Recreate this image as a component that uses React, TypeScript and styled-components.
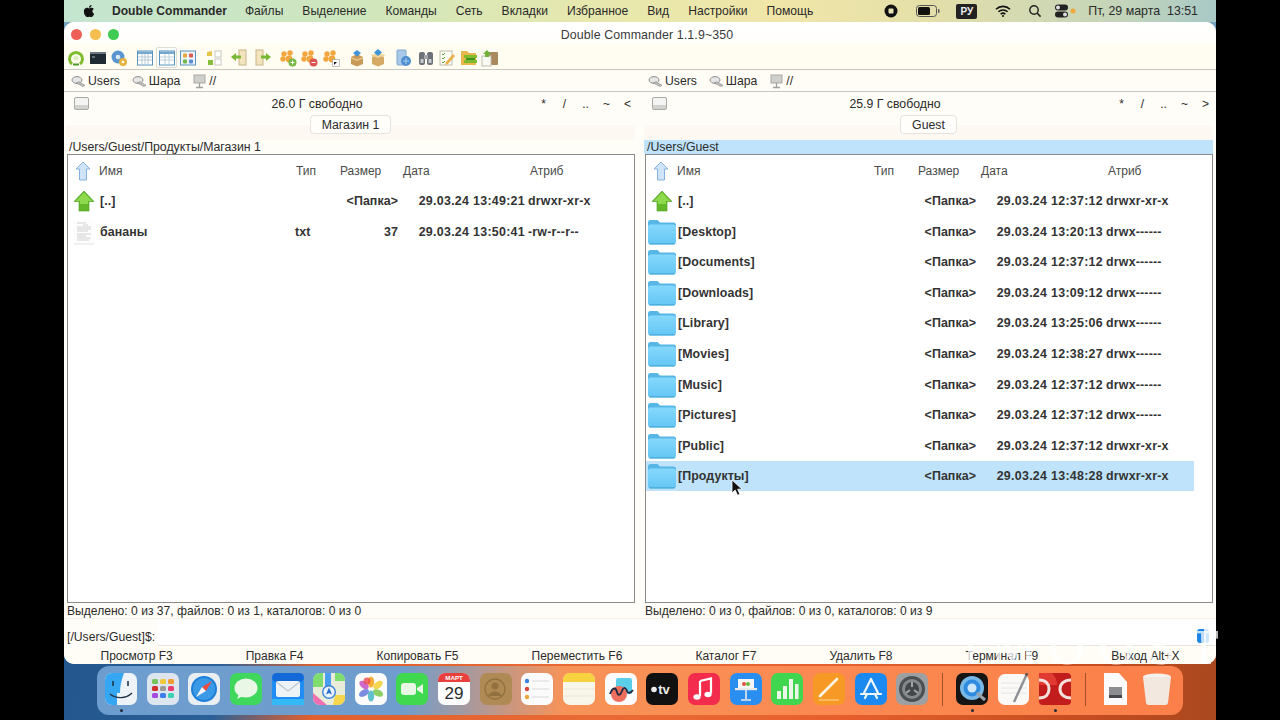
import React from "react";
import styled, { createGlobalStyle } from "styled-components";
import { FaApple } from "react-icons/fa";

const Global = createGlobalStyle`
  html, body { margin: 0; padding: 0; background: #000; }
  body { font-family: "Liberation Sans", Arial, sans-serif; color: #222; }
  * { box-sizing: border-box; }
`;

const Stage = styled.div`
  position: relative;
  width: 1280px;
  height: 720px;
  overflow: hidden;
  background: #000;
  display: flex;
  justify-content: center;
`;
const Screen = styled.div`
  width: 1152px;
  height: 720px;
  display: flex;
  flex-direction: column;
  background:
    linear-gradient(to bottom, #6f9fbe 0, #7ba6bd 40px, transparent 40px),
    linear-gradient(97deg, #1f5288 0, #2a6098 19%, #e0602e 27%, #ea6a35 50%, #e55f2c 70%, #c44c20 90%, #a9481f 100%);
`;
const MenuBar = styled.div`
  height: 22px;
  flex: none;
  display: flex;
  align-items: center;
  padding: 0 18px 0 18px;
  font-size: 12.1px;
  color: #2a2a2a;
  background: linear-gradient(90deg, #c4e5cf 0, #cfe6bd 25%, #e6e8ae 45%, #f0e6a8 62%, #e4dfa9 75%, #c3d4ba 92%, #a8c9c6 100%);
`;
const AppleMark = styled.span`
  display: flex;
  width: 30px;
  font-size: 14px;
  color: #111;
`;
const AppName = styled.span`
  font-weight: 700;
  font-size: 12.1px;
  margin-right: 18px;
`;
const MenuItem = styled.span`
  margin-right: 19px;
`;
const MenuStatus = styled.div`
  margin-left: auto;
  display: flex;
  align-items: center;
`;
const StatusIcon = styled.svg<{ $mr: number }>`
  display: block;
  margin-right: ${(p) => p.$mr}px;
`;
const LangBadge = styled.span`
  width: 21px;
  height: 15px;
  border-radius: 2px;
  background: #222;
  color: #eee;
  font-size: 10px;
  font-weight: 700;
  display: flex;
  align-items: center;
  justify-content: center;
  margin-right: 18px;
`;
const ClockText = styled.span`
  font-size: 12.4px;
  white-space: nowrap;
`;

const Window = styled.div`
  height: 642px;
  flex: none;
  display: flex;
  flex-direction: column;
  border-radius: 10px;
  overflow: hidden;
  background: #fffdf7;
  font-size: 12.3px;
  color: #2b2b2b;
`;
const TitleBar = styled.div`
  position: relative;
  height: 23px;
  flex: none;
  display: flex;
  align-items: center;
  justify-content: center;
  background: linear-gradient(#fff, #fffefa);
  padding: 3px 0 0 14px;
`;
const Lights = styled.div`
  position: absolute;
  left: 7px;
  top: 7px;
  display: flex;
  gap: 7.5px;
`;
const Light = styled.span<{ $c: string }>`
  width: 11px;
  height: 11px;
  border-radius: 50%;
  background: ${(p) => p.$c};
`;
const Title = styled.span`
  font-size: 12.4px;
  letter-spacing: 0.1px;
  color: #3b3b3b;
`;
const Toolbar = styled.div`
  height: 25px;
  flex: none;
  display: flex;
  align-items: center;
  gap: 4.5px;
  padding: 1px 0 0 1.25px;
  border-bottom: 1px solid #c9c7c2;
  background: #fffdf2;
`;
const ToolGroup = styled.div`
  display: flex;
`;
const ToolButton = styled.span<{ $active?: boolean }>`
  width: 21.5px;
  height: 21px;
  display: flex;
  align-items: center;
  justify-content: center;
  border-radius: 2px;
  ${(p) => (p.$active ? "background:#fbfbf8;box-shadow:inset 0 0 0 1px #dcdcd8;" : "")}
`;
const DriveRow = styled.div`
  height: 22px;
  flex: none;
  display: grid;
  grid-template-columns: 577px 1fr;
  border-bottom: 1px solid #c9c7c2;
  background: #fffdf5;
`;
const DriveList = styled.div`
  display: flex;
  align-items: center;
  padding: 1px 0 0 7px;
`;
const Drive = styled.span`
  display: flex;
  align-items: center;
  gap: 2px;
  margin-right: 12px;
  font-size: 12.2px;
`;
const Panes = styled.div`
  flex: 1;
  min-height: 0;
  display: grid;
  grid-template-columns: 569px 569px;
  column-gap: 9px;
  padding-left: 2px;
`;
const Pane = styled.div`
  display: flex;
  flex-direction: column;
  min-height: 0;
`;
const PaneHeader = styled.div`
  height: 23px;
  flex: none;
  display: flex;
  align-items: center;
  padding: 0 0 0 8px;
`;
const DiskButton = styled.span`
  width: 15px;
  height: 13px;
  border: 1px solid #a9a9a6;
  border-radius: 2px;
  background: linear-gradient(#f4f4f2 65%, #d2d2cf 65%);
`;
const FreeText = styled.span`
  flex: 1;
  text-align: center;
  padding-left: 12px;
`;
const NavGroup = styled.div`
  display: flex;
  margin-right: -3px;
`;
const NavButton = styled.span`
  width: 21px;
  text-align: center;
  font-size: 12px;
`;
const TabStrip = styled.div`
  height: 25px;
  flex: none;
  display: flex;
  justify-content: center;
  align-items: flex-start;
  background: linear-gradient(#fffdf7 40%, #fdf8f1 40%);
`;
const Tab = styled.span`
  height: 19px;
  padding: 0 11px;
  display: flex;
  align-items: center;
  background: #fffefb;
  border: 1px solid #e5e3de;
  border-radius: 4px;
`;
const PathBar = styled.div<{ $active?: boolean }>`
  height: 14px;
  flex: none;
  line-height: 14px;
  padding-left: 3px;
  background: ${(p) => (p.$active ? "#bfe3fa" : "transparent")};
`;
const ListBox = styled.div`
  height: 449px;
  flex: none;
  margin-left: 1px;
  border: 1px solid #8b8b8b;
  background: #fff;
  overflow: hidden;
`;
const HeadRow = styled.div`
  height: 31px;
  display: grid;
  grid-template-columns: 31px 197px 44px 63px 127px 1fr;
  align-items: center;
  color: #4a4a4a;
  font-size: 12px;
`;
const HeadIcon = styled.span`
  display: flex;
  padding-left: 7px;
`;
const Row = styled.div<{ $selected?: boolean }>`
  height: 30.55px;
  width: 548px;
  display: grid;
  grid-template-columns: 32px 195px 45px 58px 127px 1fr;
  align-items: center;
  font-weight: 700;
  font-size: 12.4px;
  letter-spacing: 0.08px;
  color: #333;
  background: ${(p) => (p.$selected ? "#bfe3fa" : "transparent")};
`;
const RowIcon = styled.span`
  display: flex;
  justify-content: center;
`;
const RightCell = styled.span`
  text-align: right;
  white-space: nowrap;
`;
const DateCell = styled(RightCell)`
  letter-spacing: 0.3px;
`;
const AttrCell = styled.span`
  padding-left: 3px;
  letter-spacing: 0.2px;
  white-space: nowrap;
`;
const StatusLine = styled.div`
  height: 16px;
  flex: none;
  line-height: 17px;
  padding-left: 1px;
  font-size: 12.1px;
`;
const CommandRow = styled.div`
  height: 28px;
  flex: none;
  display: flex;
  align-items: flex-end;
  margin-top: 1px;
  border-top: 1px solid #f5f2ea;
  padding-left: 3px;
`;
const Prompt = styled.span`
  width: 90px;
  line-height: 18px;
  font-size: 12.2px;
`;
const CommandInput = styled.div`
  flex: 1;
  height: 26px;
  background: #fff;
  border-radius: 3px 0 0 3px;
  border-bottom: 1px solid #e6e4df;
  display: flex;
  justify-content: flex-end;
  align-items: flex-end;
  padding: 0 7px 2px 0;
`;
const BlueChip = styled.span`
  width: 12px;
  height: 14px;
  border-radius: 3px;
  background: linear-gradient(90deg, #1d86ea 60%, #cfe7fb 60%);
`;
const FnRow = styled.div`
  height: 18px;
  flex: none;
  display: flex;
  align-items: center;
  background: #fffdf6;
  padding-top: 1px;
`;
const FnKey = styled.span`
  flex: 1 1 auto;
  text-align: center;
  font-size: 12px;
  white-space: nowrap;
`;

const Dock = styled.div`
  margin: 2px 33px 0 33px;
  height: 49px;
  flex: none;
  display: flex;
  padding: 7px 0 0 8px;
  border-radius: 12px;
  background: linear-gradient(90deg, #6d9dce 0, #6f9dcd 28%, #f79358 43%, #fb8a52 65%, #fb7f48 100%);
`;
const DockSlot = styled.div<{ $dot?: boolean }>`
  position: relative;
  width: 32px;
  height: 32px;
  margin-right: 9.65px;
  flex: none;
  ${(p) =>
    p.$dot
      ? `&::after{content:"";position:absolute;left:14.5px;top:36px;width:3px;height:3px;border-radius:50%;background:#1b2a3a;}`
      : ""}
`;
const DockSep = styled.div`
  width: 1px;
  height: 33px;
  margin: 0 12.7px 0 4.5px;
  background: rgba(90, 40, 20, 0.55);
  flex: none;
`;
const Cursor = styled.svg`
  position: absolute;
  left: 731px;
  top: 479px;
`;
const Watermark = styled.span`
  position: absolute;
  left: 962px;
  top: 619px;
  font-family: "Liberation Serif", serif;
  font-size: 50px;
  line-height: 56px;
  letter-spacing: 13px;
  color: rgba(255, 255, 255, 0.72);
  white-space: nowrap;
  pointer-events: none;
`;

/* --- small drawings --- */
const Folder = () => (
  <svg width="30" height="28" viewBox="0 0 30 28">
    <defs>
      <linearGradient id="folderFace" x1="0" y1="0" x2="0" y2="1">
        <stop offset="0" stopColor="#86d8fc" />
        <stop offset="1" stopColor="#63c6f4" />
      </linearGradient>
    </defs>
    <path d="M1 8V4.5A2.5 2.5 0 0 1 3.5 2h7L13 4.5h13.5A2.5 2.5 0 0 1 29 7v2H1z" fill="#56b7e6" />
    <rect x="1" y="6.5" width="28" height="20" rx="3" fill="url(#folderFace)" />
    <rect x="2" y="25" width="26" height="1.5" rx=".7" fill="#4fb0de" />
  </svg>
);
const GreenUp = () => (
  <svg width="22" height="22" viewBox="0 0 22 22">
    <path d="M11 1 21 11.5h-5V21H6v-9.5H1z" fill="#63b82a" stroke="#4c9a1c" strokeWidth=".6" />
    <path d="M11 2.5 19 11h-4v3H7v-3H3z" fill="#8ed94d" />
  </svg>
);
const BlueUp = () => (
  <svg width="16" height="20" viewBox="0 0 16 20">
    <path d="M8 1 15 8h-3.5v11h-7V8H1z" fill="#cfe4f8" stroke="#86b3de" strokeWidth="1" />
  </svg>
);
const TextFile = () => (
  <svg width="22" height="26" viewBox="0 0 22 26">
    <rect x="1" y="1" width="20" height="24" fill="#fdfdfd" />
    <g stroke="#c4c4c4" strokeWidth=".8">
      <path d="M4 4h9M10 6h5M4 8h14M4 10h14M4 12h11M4 15h14M4 17h9M4 19h14M4 21h12" />
    </g>
    <path d="M1 25h20" stroke="#e3e3e3" />
  </svg>
);
const DriveGlyph = () => (
  <svg width="15" height="13" viewBox="0 0 15 13">
    <ellipse cx="6" cy="5" rx="5" ry="3.4" fill="#e6e6e6" stroke="#8d8d8d" />
    <path d="M5 8l7 3.5 2-1.2-6-3.6z" fill="#bdbdbd" stroke="#8a8a8a" strokeWidth=".6" />
  </svg>
);
const NetGlyph = () => (
  <svg width="15" height="15" viewBox="0 0 15 15">
    <rect x="2" y="1" width="11" height="8" fill="#cfcfcb" stroke="#a9a9a5" />
    <path d="M7.5 9v4M4 13.5h7" stroke="#a0a09c" strokeWidth="1.3" />
  </svg>
);
const Ic: React.FC<{ children: React.ReactNode }> = ({ children }) => (
  <svg width="18" height="18" viewBox="0 0 18 18">
    {children}
  </svg>
);
const Paw = () => (
  <g fill="#f2a63f">
    <circle cx="5" cy="5" r="2.7" />
    <circle cx="11" cy="4" r="2.7" />
    <circle cx="4" cy="10" r="2.7" />
    <circle cx="10" cy="10" r="3.4" />
  </g>
);
const Cube = () => (
  <>
    <path d="M3 8l6-3 6 3v7l-6 2.5L3 15z" fill="#c99a57" />
    <path d="M3 8l6 2.5L15 8v1.6l-6 2.5-6-2.5z" fill="#e8c88e" />
    <path d="M9 1l4 3-4 3.5L5 4z" fill="#3f95d6" />
  </>
);
const toolGroups: React.ReactNode[][] = [
  [
    <Ic><path d="M5 15A6.5 6.5 0 1 1 13 15" fill="none" stroke="#7fbd2e" strokeWidth="3" /><path d="M6 15.5h6" stroke="#4d9c2a" strokeWidth="2" /><circle cx="9" cy="9" r="2.5" fill="#dff0c0" /></Ic>,
    <Ic><rect x="1" y="3" width="16" height="12" fill="#1f2a33" /><rect x="1" y="3" width="16" height="2" fill="#6c7680" /><path d="M3 8h3" stroke="#9fb2c0" /></Ic>,
    <Ic><circle cx="8" cy="8" r="6.5" fill="#5a95cf" /><circle cx="8" cy="8" r="2.3" fill="#dbe9f5" /><circle cx="13" cy="13" r="4" fill="#e6b33f" /><circle cx="13" cy="13" r="1.3" fill="#fff" /></Ic>,
  ],
  [
    <Ic><rect x="1.5" y="2" width="15" height="14" fill="#fff" stroke="#5a94bd" /><rect x="2" y="2.5" width="14" height="2.5" fill="#76a9cd" /><path d="M6 5v10M9 5v10M12 5v10M2 8h14M2 11h14" stroke="#b7c9d6" /></Ic>,
    <Ic><rect x="1.5" y="2" width="15" height="14" fill="#fff" stroke="#5a94bd" /><rect x="2" y="2.5" width="14" height="2.5" fill="#76a9cd" /><path d="M7 5v10M11 5v10M2 8h14M2 11h14" stroke="#bcd0dc" /></Ic>,
    <Ic><rect x="1.5" y="2" width="15" height="14" fill="#eef5fa" stroke="#5a94bd" /><rect x="4" y="4.5" width="4" height="4" rx="1" fill="#e5a83a" /><rect x="10" y="4.5" width="4" height="4" rx="1" fill="#d95e54" /><rect x="4" y="10.5" width="4" height="4" rx="1" fill="#71b648" /><rect x="10" y="10.5" width="4" height="4" rx="1" fill="#5c8fd3" /></Ic>,
  ],
  [
    <Ic><path d="M2 3l5-1v5H2z" fill="#e6c64a" /><path d="M3 11h5v5H3z" fill="#87be3c" /><rect x="10" y="2" width="6" height="6" fill="#fff" stroke="#c8c8c2" /><rect x="10" y="10" width="6" height="6" fill="#fff" stroke="#c8c8c2" /></Ic>,
  ],
  [
    <Ic><rect x="8" y="1" width="7" height="15" fill="#f3e4bd" stroke="#c9b58a" /><path d="M0 8l5-4v2.6h5v3H5V12z" fill="#79b834" /></Ic>,
    <Ic><rect x="3" y="1" width="7" height="15" fill="#f3e4bd" stroke="#c9b58a" /><path d="M18 8l-5-4v2.6H8v3h5V12z" fill="#79b834" /></Ic>,
  ],
  [
    <Ic><Paw /><circle cx="13.5" cy="13.5" r="4" fill="#76b843" /><path d="M11.5 13.5h4M13.5 11.5v4" stroke="#fff" /></Ic>,
    <Ic><Paw /><circle cx="13.5" cy="13.5" r="4" fill="#d9534f" /><path d="M11.5 13.5h4" stroke="#fff" /></Ic>,
    <Ic><Paw /><rect x="10.5" y="10.5" width="7" height="7" fill="#fff" stroke="#999" strokeWidth=".6" /><path d="M12 16l3-3h-3z" fill="#111" /></Ic>,
  ],
  [
    <Ic><Cube /></Ic>,
    <Ic><path d="M3 8l6-3 6 3v7l-6 2.5L3 15z" fill="#d6a964" /><path d="M1 6l8-2 8 2-8 3z" fill="#f0d49a" /><path d="M9 0l4 3.5-4 3.5-4-3.5z" fill="#3f95d6" /></Ic>,
  ],
  [
    <Ic><rect x="2" y="1" width="9" height="15" rx="1" fill="#a9c9e8" stroke="#7fa8cf" /><circle cx="11" cy="12" r="5" fill="#4d8fcf" /><path d="M8 12h6M11 9v6" stroke="#a9d0f0" /></Ic>,
    <Ic><rect x="2" y="3" width="6" height="13" rx="2" fill="#6c7278" /><rect x="10" y="3" width="6" height="13" rx="2" fill="#6c7278" /><rect x="7" y="6" width="4" height="4" fill="#a4a8ac" /><rect x="3.5" y="10" width="3" height="4" fill="#c7cbcf" /><rect x="11.5" y="10" width="3" height="4" fill="#c7cbcf" /></Ic>,
    <Ic><rect x="2" y="2" width="12" height="14" fill="#fdfdf6" stroke="#bdbdb2" /><path d="M4 5l1 1 2-2M4 9l1 1 2-2M4 13l1 1 2-2" stroke="#5ba83a" fill="none" /><path d="M8 13l7-8 2 2-7 8-3 1z" fill="#e8b04a" /></Ic>,
    <Ic><path d="M1 4V2h6l2 2h7v12H1z" fill="#e8b84e" /><rect x="4" y="6" width="13" height="3" fill="#7fbb2c" /><rect x="4" y="11" width="13" height="3" fill="#7fbb2c" /><path d="M6 9h9v2H6z" fill="#3f8f22" /></Ic>,
    <Ic><rect x="7" y="3" width="10" height="13" rx="1" fill="#a88a5e" /><rect x="1" y="7" width="9" height="10" fill="#fafaf4" stroke="#bdbdb2" /><path d="M6 1l4 4H8v3H4V5H2z" fill="#6eb23a" /></Ic>,
  ],
];

/* dock artwork */
const D: React.FC<{ children: React.ReactNode }> = ({ children }) => (
  <svg width="32" height="32" viewBox="0 0 32 32">
    {children}
  </svg>
);
const dockIcons: { node: React.ReactNode; dot?: boolean }[] = [
  { dot: true, node: <D><defs><clipPath id="fc"><rect width="32" height="32" rx="7" /></clipPath></defs><g clipPath="url(#fc)"><rect width="32" height="32" fill="#eef3f8" /><path d="M0 0h19c-3 8-4 14-4 20H12v12H0z" fill="#35a7f2" /><path d="M8 8v5M23 8v5" stroke="#20354a" strokeWidth="1.6" /><path d="M5 21c6 5 16 5 22-1" fill="none" stroke="#20354a" strokeWidth="1.3" /></g></D> },
  { node: <D><rect width="32" height="32" rx="7" fill="#dde6ee" /><g><rect x="5" y="6" width="6" height="5" rx="1.5" fill="#76c35a" /><rect x="13" y="6" width="6" height="5" rx="1.5" fill="#f0c93c" /><rect x="21" y="6" width="6" height="5" rx="1.5" fill="#ef9a33" /><rect x="5" y="13" width="6" height="5" rx="1.5" fill="#d22f2f" /><rect x="13" y="13" width="6" height="5" rx="1.5" fill="#9a9a9a" /><rect x="21" y="13" width="6" height="5" rx="1.5" fill="#e83d6e" /><rect x="5" y="20" width="6" height="5" rx="1.5" fill="#a64be0" /><rect x="13" y="20" width="6" height="5" rx="1.5" fill="#3f7de8" /><rect x="21" y="20" width="6" height="5" rx="1.5" fill="#3fd0b4" /></g></D> },
  { node: <D><rect width="32" height="32" rx="7" fill="#e9eef3" /><circle cx="16" cy="16" r="13" fill="#1e7fd6" /><circle cx="16" cy="16" r="11" fill="#3a9ae8" /><path d="M24 8l-6 10-4-4z" fill="#ef4a3e" /><path d="M8 24l6-10 4 4z" fill="#f4f4f4" /></D> },
  { node: <D><rect width="32" height="32" rx="7" fill="#3fd85c" /><ellipse cx="16" cy="15" rx="11.5" ry="9.5" fill="#e9f8e6" /><path d="M9 21l-2 5 6-3z" fill="#e9f8e6" /></D> },
  { node: <D><rect width="32" height="32" rx="7" fill="#1f8df2" /><rect width="32" height="9" rx="5" fill="#1369d8" /><rect x="4" y="8" width="24" height="16" rx="2" fill="#eef3f7" /><path d="M4.5 9 16 18 27.5 9" fill="none" stroke="#b9c5d1" strokeWidth="1.2" /><rect y="26" width="32" height="6" fill="#35b8f7" /></D> },
  { node: <D><defs><clipPath id="mc"><rect width="32" height="32" rx="7" /></clipPath></defs><g clipPath="url(#mc)"><rect width="32" height="32" fill="#e8ecd8" /><path d="M0 0h10v14H0z" fill="#7fdc6e" /><path d="M22 0h10v8H22z" fill="#7fdc6e" /><path d="M0 20l14 12H0z" fill="#f06fb1" /><path d="M22 22h10v10H20z" fill="#f6d64a" /><path d="M12 0h6v14h-6z" fill="#4b9df0" /><circle cx="16" cy="19" r="7" fill="#3d82d9" /><circle cx="16" cy="19" r="5.6" fill="#eaf2fb" /><path d="M16 14.5l3 7-3-1.5-3 1.5z" fill="#2a6ecb" /></g></D> },
  { node: <D><rect width="32" height="32" rx="7" fill="#fbfbfb" /><g><ellipse cx="16" cy="9" rx="3.2" ry="5.5" fill="#f5a623" opacity=".9" /><ellipse cx="23" cy="12" rx="3.2" ry="5.5" transform="rotate(50 23 12)" fill="#f3d13f" opacity=".9" /><ellipse cx="23" cy="20" rx="3.2" ry="5.5" transform="rotate(115 23 20)" fill="#7fcb56" opacity=".9" /><ellipse cx="16" cy="23" rx="3.2" ry="5.5" fill="#4fb8c8" opacity=".9" /><ellipse cx="9" cy="20" rx="3.2" ry="5.5" transform="rotate(60 9 20)" fill="#6a7fdb" opacity=".9" /><ellipse cx="9" cy="12" rx="3.2" ry="5.5" transform="rotate(130 9 12)" fill="#c65ac9" opacity=".9" /><circle cx="12" cy="8" r="3.5" fill="#ee4a4a" opacity=".8" /></g></D> },
  { node: <D><rect width="32" height="32" rx="7" fill="#3fd84f" /><rect x="5" y="10" width="15" height="12" rx="3" fill="#e8f7e4" /><path d="M21 15l6-4v10l-6-4z" fill="#e8f7e4" /></D> },
  { node: <D><defs><clipPath id="cc"><rect width="32" height="32" rx="7" /></clipPath></defs><g clipPath="url(#cc)"><rect width="32" height="32" fill="#fdfdfd" /><rect width="32" height="9" fill="#e8403c" /></g><text x="16" y="7.3" textAnchor="middle" fontFamily="Liberation Sans" fontWeight="700" fontSize="6.2" fill="#fff">МАРТ</text><text x="16" y="26" textAnchor="middle" fontFamily="Liberation Sans" fontSize="17" fill="#2a2a2a">29</text></D> },
  { node: <D><rect width="32" height="32" rx="7" fill="#b08a55" /><circle cx="15" cy="16" r="10" fill="none" stroke="#92703f" strokeWidth="1.3" /><circle cx="15" cy="13" r="3.5" fill="#92703f" /><path d="M8 23c2-6 12-6 14 0" fill="#92703f" /></D> },
  { node: <D><rect width="32" height="32" rx="7" fill="#fbfbfb" /><circle cx="6" cy="8" r="2.2" fill="#3b82e0" /><circle cx="6" cy="16" r="2.2" fill="#d9453e" /><circle cx="6" cy="24" r="2.2" fill="#eea63a" /><path d="M11 8h17M11 16h17M11 24h17" stroke="#d8d8d8" /></D> },
  { node: <D><rect width="32" height="32" rx="7" fill="#f8f5e9" /><path d="M0 7a7 7 0 0 1 7-7h18a7 7 0 0 1 7 7v2H0z" fill="#f6d23e" /><path d="M0 16h32M0 23h32" stroke="#ece8d8" /></D> },
  { node: <D><rect width="32" height="32" rx="7" fill="#fcfcfc" /><rect x="11" y="5" width="16" height="16" rx="2" fill="#5bcfe8" /><circle cx="14" cy="21" r="8" fill="#ef6f5e" /><path d="M5 21c3-8 6-6 7-2s3 4 5-1 4-3 5 0 4 2 6-1" fill="none" stroke="#1d2a44" strokeWidth="1.8" /></D> },
  { node: <D><rect width="32" height="32" rx="7" fill="#111" /><text x="18" y="21" textAnchor="middle" fontFamily="Liberation Sans" fontWeight="700" fontSize="13" fill="#eee">tv</text><circle cx="8" cy="16.5" r="2.8" fill="#eee" /></D> },
  { node: <D><rect width="32" height="32" rx="7" fill="#f32b4c" /><path d="M12 8l11-2.5v15" fill="none" stroke="#fff" strokeWidth="2.2" /><path d="M12 8v15" stroke="#fff" strokeWidth="2.2" /><ellipse cx="9" cy="24" rx="3.6" ry="2.8" fill="#fff" /><ellipse cx="20" cy="21.5" rx="3.6" ry="2.8" fill="#fff" /></D> },
  { node: <D><rect width="32" height="32" rx="7" fill="#2a8ef0" /><rect x="8" y="6" width="16" height="10" fill="#f6f6f6" /><rect x="5" y="15" width="22" height="2.2" fill="#eaeaea" /><path d="M16 17v9M11 27h10" stroke="#eaeaea" strokeWidth="1.6" /><circle cx="14" cy="11" r="2" fill="#e0533f" /><circle cx="18" cy="11" r="2" fill="#6cb93f" /></D> },
  { node: <D><rect width="32" height="32" rx="7" fill="#41d64f" /><rect x="6" y="18" width="4" height="8" fill="#eaf7e8" /><rect x="12" y="13" width="4" height="13" fill="#eaf7e8" /><rect x="18" y="6" width="4" height="20" fill="#eaf7e8" /><rect x="24" y="11" width="3.5" height="15" fill="#eaf7e8" /></D> },
  { node: <D><rect width="32" height="32" rx="7" fill="#f79a25" /><path d="M7 23 24 6" stroke="#fdf6e2" strokeWidth="2.6" strokeLinecap="round" /><path d="M6 27h20" stroke="#ffd79a" /></D> },
  { node: <D><rect width="32" height="32" rx="7" fill="#1a8af0" /><path d="M16 6 9 20M16 6l7 14M6 21h20M10 25l2-4M22 25l-2-4" stroke="#f2f7fb" strokeWidth="2.2" strokeLinecap="round" /></D> },
  { node: <D><rect width="32" height="32" rx="7" fill="#9da0a3" /><circle cx="16" cy="16" r="13" fill="#4c4f52" /><circle cx="16" cy="16" r="10" fill="#85898c" /><circle cx="16" cy="16" r="7" fill="#44474a" /><path d="M16 9v5M10 20l4-3M22 20l-4-3" stroke="#a2a5a8" strokeWidth="2" /></D> },
  { node: <D><rect width="32" height="32" rx="7" fill="#151515" /><circle cx="16" cy="15" r="12" fill="#78b9e8" /><circle cx="16" cy="15" r="8.5" fill="#2f8be0" /><circle cx="16" cy="15" r="4.5" fill="#cfe6f8" /><path d="M21 20l8 7" stroke="#9aa1a8" strokeWidth="3" /></D>, dot: true },
  { node: <D><rect y="1" width="31" height="31" rx="7" fill="#faf9f5" /><path d="M3 10h26M3 15h26M3 20h26" stroke="#e6e6ea" /><path d="M16 29 28 3" stroke="#8d9197" strokeWidth="2.4" /><path d="M29 0l-1 3" stroke="#54585d" strokeWidth="2.4" /></D> },
  { node: <D><rect width="32" height="32" rx="4" fill="#c21c1c" /><path d="M0 0h13c4 4 5 8 5 12H0z" fill="#e03a32" /><path d="M0 7c7 0 10 4 10 9s-3 9-10 9" fill="none" stroke="#f5e1dc" strokeWidth="3" /><path d="M32 7c-7 0-11 4-11 9s4 9 11 9" fill="none" stroke="#f5e1dc" strokeWidth="3" /></D>, dot: true },
];
const dockTail: React.ReactNode[] = [
  <D><path d="M5 0h15l8 9v23H5z" fill="#fbfbfb" /><rect x="10" y="14" width="13" height="9" fill="#8b8d90" /><rect x="10" y="22" width="13" height="3" fill="#45474a" /></D>,
  <D><ellipse cx="16" cy="4" rx="14" ry="3.6" fill="#f5f2ee" /><path d="M2 4h28l-3 26a3 3 0 0 1-3 2H8a3 3 0 0 1-3-2z" fill="#f3e8e0" /></D>,
];

type RowData = { name: string; type?: string; size: string; date: string; attr: string; icon: "up" | "folder" | "file"; selected?: boolean };

const leftRows: RowData[] = [
  { name: "[..]", size: "<Папка>", date: "29.03.24 13:49:21", attr: "drwxr-xr-x", icon: "up" },
  { name: "бананы", type: "txt", size: "37", date: "29.03.24 13:50:41", attr: "-rw-r--r--", icon: "file" },
];
const rightRows: RowData[] = [
  { name: "[..]", size: "<Папка>", date: "29.03.24 12:37:12", attr: "drwxr-xr-x", icon: "up" },
  { name: "[Desktop]", size: "<Папка>", date: "29.03.24 13:20:13", attr: "drwx------", icon: "folder" },
  { name: "[Documents]", size: "<Папка>", date: "29.03.24 12:37:12", attr: "drwx------", icon: "folder" },
  { name: "[Downloads]", size: "<Папка>", date: "29.03.24 13:09:12", attr: "drwx------", icon: "folder" },
  { name: "[Library]", size: "<Папка>", date: "29.03.24 13:25:06", attr: "drwx------", icon: "folder" },
  { name: "[Movies]", size: "<Папка>", date: "29.03.24 12:38:27", attr: "drwx------", icon: "folder" },
  { name: "[Music]", size: "<Папка>", date: "29.03.24 12:37:12", attr: "drwx------", icon: "folder" },
  { name: "[Pictures]", size: "<Папка>", date: "29.03.24 12:37:12", attr: "drwx------", icon: "folder" },
  { name: "[Public]", size: "<Папка>", date: "29.03.24 12:37:12", attr: "drwxr-xr-x", icon: "folder" },
  { name: "[Продукты]", size: "<Папка>", date: "29.03.24 13:48:28", attr: "drwxr-xr-x", icon: "folder", selected: true },
];

const rowIcon = (k: RowData["icon"]) => (k === "up" ? <GreenUp /> : k === "folder" ? <Folder /> : <TextFile />);

const Drives = () => (
  <DriveList>
    <Drive><DriveGlyph />Users</Drive>
    <Drive><DriveGlyph />Шара</Drive>
    <Drive><NetGlyph />//</Drive>
  </DriveList>
);

const PanePart: React.FC<{ free: string; tab: string; path: string; active?: boolean; rows: RowData[]; status: string; last: string }> = ({ free, tab, path, active, rows, status, last }) => (
  <Pane>
    <PaneHeader>
      <DiskButton />
      <FreeText>{free}</FreeText>
      <NavGroup>
        {["*", "/", "..", "~", last].map((n) => (
          <NavButton key={n}>{n}</NavButton>
        ))}
      </NavGroup>
    </PaneHeader>
    <TabStrip>
      <Tab>{tab}</Tab>
    </TabStrip>
    <PathBar $active={active}>{path}</PathBar>
    <ListBox>
      <HeadRow>
        <HeadIcon><BlueUp /></HeadIcon>
        <span>Имя</span>
        <span>Тип</span>
        <span>Размер</span>
        <span>Дата</span>
        <span>Атриб</span>
      </HeadRow>
      {rows.map((r) => (
        <Row key={r.name} $selected={r.selected}>
          <RowIcon>{rowIcon(r.icon)}</RowIcon>
          <span>{r.name}</span>
          <span>{r.type}</span>
          <RightCell>{r.size}</RightCell>
          <DateCell>{r.date}</DateCell>
          <AttrCell>{r.attr}</AttrCell>
        </Row>
      ))}
    </ListBox>
    <StatusLine>{status}</StatusLine>
  </Pane>
);

const fnKeys = ["Просмотр F3", "Правка F4", "Копировать F5", "Переместить F6", "Каталог F7", "Удалить F8", "Терминал F9", "Выход Alt+X"];
const menus = ["Файлы", "Выделение", "Команды", "Сеть", "Вкладки", "Избранное", "Вид", "Настройки", "Помощь"];

export default function App() {
  return (
    <Stage>
      <Global />
      <Screen>
        <MenuBar>
          <AppleMark><FaApple /></AppleMark>
          <AppName>Double Commander</AppName>
          {menus.map((m) => (
            <MenuItem key={m}>{m}</MenuItem>
          ))}
          <MenuStatus>
            <StatusIcon $mr={18} width="14" height="14" viewBox="0 0 14 14">
              <circle cx="7" cy="7" r="6.5" fill="#111" />
              <rect x="4.5" y="4.5" width="5" height="5" rx="1" fill="#e8e6b6" />
            </StatusIcon>
            <StatusIcon $mr={16} width="24" height="12" viewBox="0 0 24 12">
              <rect x=".5" y=".5" width="20" height="11" rx="3" fill="none" stroke="#555" />
              <rect x="2" y="2" width="12" height="8" rx="1.5" fill="#111" />
              <rect x="22" y="4" width="1.5" height="4" rx=".7" fill="#555" />
            </StatusIcon>
            <LangBadge>РУ</LangBadge>
            <StatusIcon $mr={17} width="16" height="12" viewBox="0 0 16 12">
              <path d="M1 4.2a10 10 0 0 1 14 0M3.4 6.8a6.6 6.6 0 0 1 9.2 0M5.7 9.2a3.3 3.3 0 0 1 4.6 0" fill="none" stroke="#111" strokeWidth="1.6" />
              <circle cx="8" cy="11" r="1" fill="#111" />
            </StatusIcon>
            <StatusIcon $mr={12} width="14" height="14" viewBox="0 0 14 14">
              <circle cx="6" cy="6" r="4.2" fill="none" stroke="#222" strokeWidth="1.4" />
              <path d="M9 9l3.6 3.6" stroke="#222" strokeWidth="1.5" />
            </StatusIcon>
            <StatusIcon $mr={12} width="22" height="14" viewBox="0 0 22 14">
              <rect x="1" y="0.5" width="13" height="6" rx="3" fill="#222" />
              <circle cx="4" cy="3.5" r="2" fill="#ddd" />
              <rect x="1" y="7.5" width="13" height="6" rx="3" fill="#222" />
              <circle cx="11" cy="10.5" r="2" fill="#ddd" />
              <circle cx="19" cy="7" r="2.5" fill="#f0a63c" />
            </StatusIcon>
            <ClockText>Пт, 29 марта&nbsp; 13:51</ClockText>
          </MenuStatus>
        </MenuBar>
        <Window>
          <TitleBar>
            <Lights>
              <Light $c="#ee5f58" />
              <Light $c="#f6bd4f" />
              <Light $c="#3fca53" />
            </Lights>
            <Title>Double Commander 1.1.9~350</Title>
          </TitleBar>
          <Toolbar>
            {toolGroups.map((g, i) => (
              <ToolGroup key={i}>
                {g.map((node, j) => (
                  <ToolButton key={j} $active={i === 1 && j === 1}>{node}</ToolButton>
                ))}
              </ToolGroup>
            ))}
          </Toolbar>
          <DriveRow>
            <Drives />
            <Drives />
          </DriveRow>
          <Panes>
            <PanePart free="26.0 Г свободно" tab="Магазин 1" path="/Users/Guest/Продукты/Магазин 1" rows={leftRows} status="Выделено: 0 из 37, файлов: 0 из 1, каталогов: 0 из 0" last="<" />
            <PanePart free="25.9 Г свободно" tab="Guest" path="/Users/Guest" active rows={rightRows} status="Выделено: 0 из 0, файлов: 0 из 0, каталогов: 0 из 9" last=">" />
          </Panes>
          <CommandRow>
            <Prompt>[/Users/Guest]$:</Prompt>
            <CommandInput><BlueChip /></CommandInput>
          </CommandRow>
          <FnRow>
            {fnKeys.map((k) => (
              <FnKey key={k}>{k}</FnKey>
            ))}
          </FnRow>
        </Window>
        <Dock>
          {dockIcons.map((d, i) => (
            <React.Fragment key={i}>
              {i === 20 && <DockSep />}
              <DockSlot $dot={d.dot}>{d.node}</DockSlot>
            </React.Fragment>
          ))}
          <DockSep />
          {dockTail.map((n, i) => (
            <DockSlot key={i}>{n}</DockSlot>
          ))}
        </Dock>
      </Screen>
      <Cursor width="14" height="18" viewBox="0 0 14 18">
        <path d="M1 1v13l3.2-3 2.3 5.2 2.4-1-2.3-5H11z" fill="#111" stroke="#fff" strokeWidth=".8" />
      </Cursor>
      <Watermark>IMOOST</Watermark>
    </Stage>
  );
}
